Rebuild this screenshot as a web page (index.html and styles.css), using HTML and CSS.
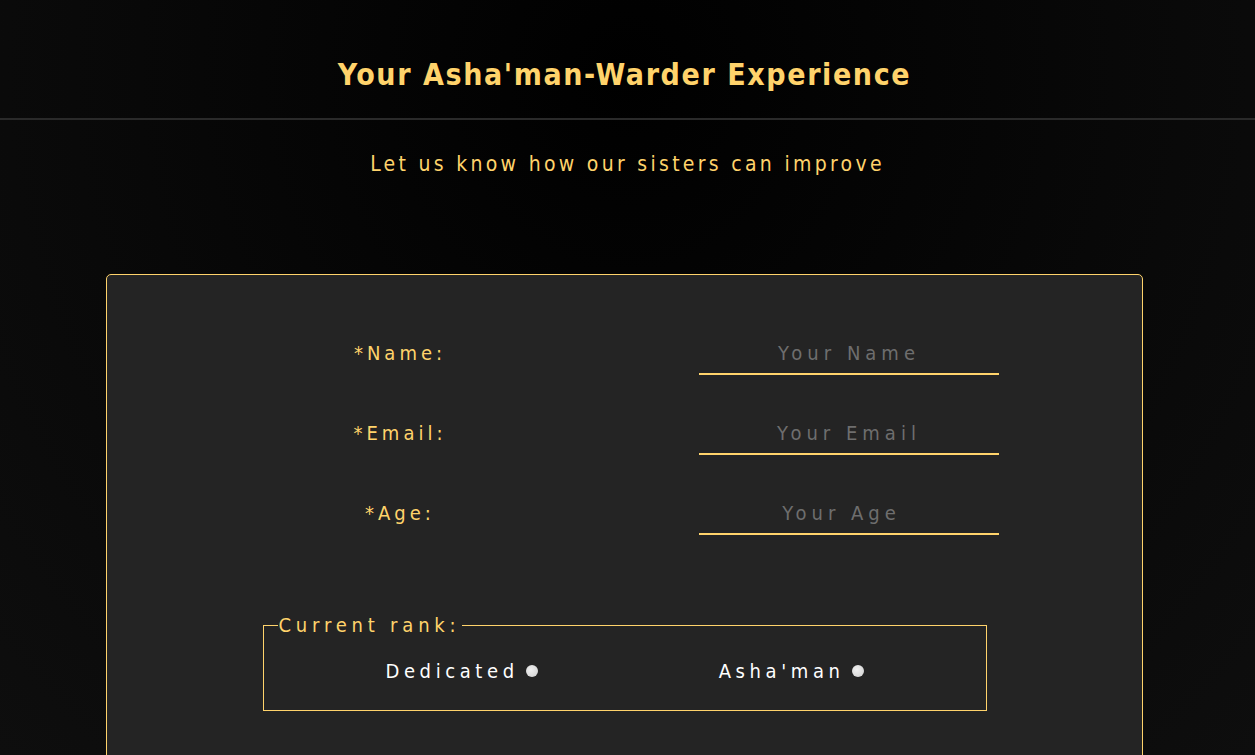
FILE: index.html
```html
<!DOCTYPE html>
<html>
<head>
<meta charset="utf-8">
<link rel="stylesheet" href="styles.css">
</head>
<body>
<header class="header">
  <h1 class="title">Your Asha'man-Warder Experience</h1>
</header>
<p class="subtitle">Let us know how our sisters can improve</p>
<main class="card">
  <form class="form">
    <div class="row">
      <label class="label" for="name">*Name:</label>
      <input class="input" id="name" type="text" placeholder="Your Name">
    </div>
    <div class="row">
      <label class="label" for="email">*Email:</label>
      <input class="input" id="email" type="email" placeholder="Your Email">
    </div>
    <div class="row">
      <label class="label" for="age">*Age:</label>
      <input class="input" id="age" type="number" placeholder="Your Age">
    </div>
    <fieldset class="rank">
      <legend class="legend">Current rank:</legend>
      <div class="options">
        <label class="option">Dedicated <span class="dot"></span></label>
        <label class="option">Asha'man <span class="dot"></span></label>
      </div>
    </fieldset>
  </form>
</main>
</body>
</html>
```
FILE: styles.css
```css
html, body {
  margin: 0;
  padding: 0;
  height: 100%;
}
body {
  background: radial-gradient(ellipse at 50% 10%, #000 0%, #080808 55%, #0e0e0e 100%);
  font-family: "DejaVu Sans Condensed", "DejaVu Sans", sans-serif;
  color: #ffd36b;
  overflow: hidden;
}
.header {
  height: 118px;
  border-bottom: 2px solid #2a2a2a;
  display: flex;
  align-items: center;
  justify-content: center;
}
.title {
  margin: 0 6px 0 0;
  padding-top: 30px;
  font-size: 30px;
  font-weight: bold;
  letter-spacing: 1.6px;
  color: #ffd36b;
}
.subtitle {
  margin: 32px 0 0;
  text-align: center;
  font-size: 21px;
  letter-spacing: 3.3px;
  color: #ffd36b;
}
.card {
  margin: 98px 0 0 106px;
  width: 1035px;
  height: 600px;
  background: #242424;
  border: 1px solid #ffd36b;
  border-radius: 5px;
}
.form {
  display: flex;
  flex-direction: column;
  align-items: center;
  padding-top: 59px;
}
.row {
  display: flex;
  align-items: flex-start;
  gap: 149px;
  height: 80px;
}
.label {
  width: 300px;
  height: 38px;
  line-height: 38px;
  text-align: center;
  font-size: 20px;
  letter-spacing: 4px;
  color: #ffd36b;
}
.input {
  width: 300px;
  height: 41px;
  box-sizing: border-box;
  background: transparent;
  border: none;
  border-bottom: 2px solid #ffd36b;
  padding: 0 0 1px;
  font-family: inherit;
  font-size: 20px;
  letter-spacing: 5px;
  text-align: center;
  color: #ddd;
  outline: none;
}
.input::placeholder { color: #6e6e6e; }
.rank {
  margin: 39px 0 0;
  width: 724px;
  box-sizing: border-box;
  height: 98px;
  border: 1px solid #ffd36b;
  padding: 0;
}
.legend {
  margin-left: 14px;
  padding: 0 2px 0 1px;
  font-size: 20px;
  letter-spacing: 4.8px;
  color: #ffd36b;
}
.options {
  display: flex;
  justify-content: center;
  gap: 181px;
  padding-top: 22px;
}
.option {
  font-size: 20px;
  letter-spacing: 4.6px;
  color: #fff;
  display: flex;
  align-items: center;
}
.dot {
  display: inline-block;
  width: 12px;
  height: 12px;
  margin-left: 7px;
  border-radius: 50%;
  background: radial-gradient(circle at 40% 40%, #f0f0f0, #cfcfcf);
}
```
